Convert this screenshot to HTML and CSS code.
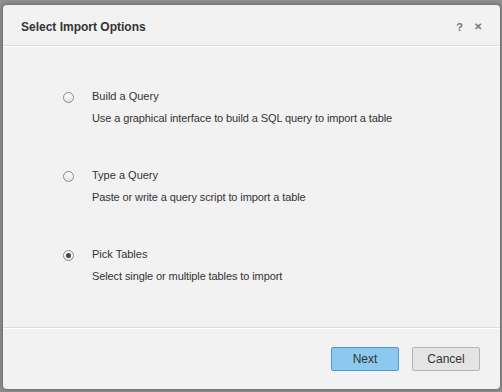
FILE: index.html
```html
<!DOCTYPE html>
<html lang="en">
<head>
    <meta charset="UTF-8">
    <title>Select Import Options</title>
    <link rel="stylesheet" href="styles.css">
</head>
<body>
    <div class="dialog">
        <div class="dialog-header">
            <h2 class="dialog-title">Select Import Options</h2>
            <div class="header-tools">
                <span class="tool">?</span>
                <span class="tool close">&#x2715;</span>
            </div>
        </div>

        <div class="dialog-body">
            <label class="option">
                <span class="radio"></span>
                <span class="option-text">
                    <span class="option-name">Build a Query</span>
                    <span class="option-desc">Use a graphical interface to build a SQL query to import a table</span>
                </span>
            </label>
            <label class="option">
                <span class="radio"></span>
                <span class="option-text">
                    <span class="option-name">Type a Query</span>
                    <span class="option-desc">Paste or write a query script to import a table</span>
                </span>
            </label>
            <label class="option">
                <span class="radio checked"></span>
                <span class="option-text">
                    <span class="option-name">Pick Tables</span>
                    <span class="option-desc">Select single or multiple tables to import</span>
                </span>
            </label>
        </div>

        <div class="dialog-footer">
            <button class="btn btn-primary">Next</button>
            <button class="btn">Cancel</button>
        </div>
    </div>
</body>
</html>
```

FILE: styles.css
```css
body {
    margin: 0;
    padding: 5px 2px 3px 3px;
    background: #8f8f8f;
    font-family: 'Liberation Sans', Arial, sans-serif;
    font-size: 11px;
    color: #333;
}

.dialog {
    background: #f2f2f2;
    border-radius: 4px;
    height: 384px;
    display: flex;
    flex-direction: column;
    box-shadow: 0 0 4px rgba(0, 0, 0, 0.4);
}

.dialog-header {
    display: flex;
    align-items: center;
    justify-content: space-between;
    height: 41px;
    padding: 3px 18px 0 18px;
    box-sizing: border-box;
    border-bottom: 1px solid #dcdcdc;
    box-shadow: 0 1px 0 #fff;
}

.dialog-title {
    margin: 0;
    font-size: 12px;
    font-weight: bold;
    color: #333;
}

.header-tools {
    display: flex;
    gap: 11px;
}

.tool {
    font-size: 11px;
    font-weight: bold;
    color: #777;
}

.close {
    font-size: 10px;
}

.dialog-body {
    flex: 1;
    display: flex;
    flex-direction: column;
    gap: 44px;
    padding: 44px 0 0 60px;
    border-bottom: 1px solid #dcdcdc;
}

.option {
    display: flex;
    align-items: flex-start;
}

.radio {
    width: 9px;
    height: 9px;
    border: 1px solid #8a8a8a;
    border-radius: 50%;
    background: linear-gradient(#fff, #e4e4e4);
    margin: 2px 18px 0 0;
    position: relative;
}

.radio.checked::after {
    content: "";
    position: absolute;
    left: 2px;
    top: 2px;
    width: 5px;
    height: 5px;
    border-radius: 50%;
    background: #444;
}

.option-text {
    display: flex;
    flex-direction: column;
    gap: 9px;
}

.option-name,
.option-desc {
    line-height: 13px;
}

.option-desc {
    letter-spacing: -0.1px;
}

.dialog-footer {
    display: flex;
    justify-content: flex-end;
    gap: 13px;
    height: 61px;
    padding: 18px 20px 0 0;
    box-sizing: border-box;
    border-top: 1px solid #fff;
}

.btn {
    width: 68px;
    height: 24px;
    font-family: 'Liberation Sans', Arial, sans-serif;
    font-size: 12px;
    color: #333;
    background: #e4e4e4;
    border: 1px solid #b5b5b5;
    border-radius: 2px;
}

.btn-primary {
    background: #8cc9ef;
    border-color: #4f97cf;
}
```
